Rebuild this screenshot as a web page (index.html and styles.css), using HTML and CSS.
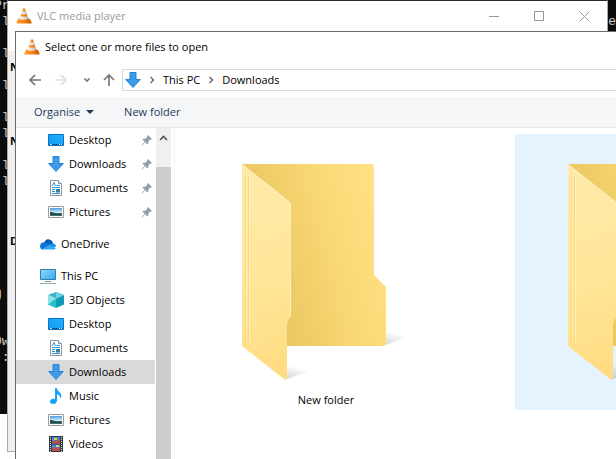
FILE: index.html
```html
<!DOCTYPE html>
<html lang="en">
<head>
<meta charset="utf-8">
<title>Select one or more files to open</title>
<link rel="stylesheet" href="styles.css">
</head>
<body>
<svg class="defs" aria-hidden="true">
  <defs>
    <linearGradient id="g-orange"><stop offset="0" stop-color="#ffa22d"/><stop offset=".6" stop-color="#f47a08"/><stop offset="1" stop-color="#c75a00"/></linearGradient>
    <linearGradient id="g-white"><stop offset="0" stop-color="#fff"/><stop offset="1" stop-color="#b5b8bd"/></linearGradient>
    <linearGradient id="g-screen" x1="0" y1="1" x2="1" y2="0"><stop offset="0" stop-color="#1598f5"/><stop offset="1" stop-color="#27b0ff"/></linearGradient>
    <linearGradient id="g-pc" x1="0" y1="0" x2="1" y2="1"><stop offset="0" stop-color="#8ed9ff"/><stop offset="1" stop-color="#35a8f0"/></linearGradient>
    <linearGradient id="g-sky" x2="0" y2="1"><stop offset="0" stop-color="#4b9be4"/><stop offset=".6" stop-color="#d9effb"/><stop offset=".65" stop-color="#3e6f63"/><stop offset="1" stop-color="#356b86"/></linearGradient>
    <linearGradient id="g-back" gradientUnits="userSpaceOnUse" x1="70" y1="126" x2="184" y2="96"><stop offset="0" stop-color="#eac862"/><stop offset=".5" stop-color="#f7d673"/><stop offset="1" stop-color="#ffe082"/></linearGradient>
    <linearGradient id="g-front" gradientUnits="userSpaceOnUse" x1="44" y1="70" x2="100" y2="240"><stop offset="0" stop-color="#ffe9a6"/><stop offset=".5" stop-color="#ffe596"/><stop offset="1" stop-color="#ffdb80"/></linearGradient>
    <linearGradient id="g-shade" x1="0" y1="1" x2=".4" y2="0"><stop offset="0" stop-color="#000" stop-opacity=".16"/><stop offset="1" stop-color="#000" stop-opacity="0"/></linearGradient>
    <symbol id="cone" viewBox="0 0 16 16"><path d="M2.500 10.500h11L15.500 14v1.500H.5V14z" fill="url(#g-orange)"/><path d="M7 .7q1-.9 2 0L12.600 12q-4.600 2.200-9.200 0z" fill="url(#g-orange)"/><path d="M6.200 3.200h3.600l.9 2.800q-2.700 1-5.400 0zM4.700 8q3.300 1.200 6.600 0l.9 2.900q-4.200 1.700-8.400 0z" fill="url(#g-white)"/></symbol>
    <symbol id="down" viewBox="0 0 16 16"><path d="M5 .5h6v7h4.300L8 15.500.7 7.500H5z" fill="#3e9be9" stroke="#2382d3"/></symbol>
    <symbol id="desktop" viewBox="0 0 16 16"><path d="M.5 2.500h15v11H.5z" fill="url(#g-screen)" stroke="#0874c9"/><path d="M1 12.500h14" stroke="#075a9f"/><path d="M2 12.500h1.500M11 12.500h1M13 12.500h1" stroke="#fff"/></symbol>
    <symbol id="doc" viewBox="0 0 16 16"><path d="M2.500.5h8l3 3v12h-11z" fill="#fff" stroke="#929699"/><path d="M10.500.5v3h3" fill="#eee" stroke="#929699"/><path d="m4 6 2-3.500L7.500 6M8.500 5.500H12M4 7.500h8M4 9.500h3M4 11.500h3M4 13.500h8" fill="none" stroke="#2196d8"/><path d="M8 9h4v3.500H8z" fill="#397e9b"/></symbol>
    <symbol id="picture" viewBox="0 0 16 16"><path d="M.5 2.500h15v11H.5z" fill="#fff" stroke="#9b9b9b"/><path d="M2 4h12v8H2z" fill="url(#g-sky)"/><path d="M2 8q3-.5 6 1.400 3 .2 6 .6v1q-6-.5-12 0z" fill="#24513e"/></symbol>
    <symbol id="cloud" viewBox="0 0 16 16"><path d="M4 7Q6 1 11.200 4.300q1.500 1 1.800 3.200L8 10z" fill="#0a5cb5"/><path d="M0 10.500Q0 6 5 6.200l6 3.300-8.500 4Q.2 13 0 10.500z" fill="#1374d4"/><path d="M9 9q2-2.200 4.500-1.500Q16 8 16 10.700l-5 1z" fill="#168de2"/><path d="M2 13 9.500 9l6.300 3.200q-.6 1.300-2.300 1.300H3.500z" fill="#2da9ef"/></symbol>
    <symbol id="pc" viewBox="0 0 16 16"><path d="M.5 1.500h15v10H.5z" fill="url(#g-pc)" stroke="#397da5"/><path d="M5 13.500h6" stroke="#7c93a3"/><path d="M0 15.500h16" stroke="#8ea9bb"/></symbol>
    <symbol id="cube" viewBox="0 0 16 16"><path d="m8 0 8 3-8 3.500L0 3z" fill="#36b3c9"/><path d="m0 3 8 3.500V16l-8-3.500z" fill="#8be5e9"/><path d="m16 3-8 3.500V16l8-3.500z" fill="#119bb4"/><path d="m0 12.500 8-6V16z" fill="#25c2cc"/><path d="m8 0 8 3-8 3.500z" fill="#72cfdd"/></symbol>
    <symbol id="note" viewBox="0 0 16 16"><path d="M7 0h1.800q.2 2.500 2.700 4.300 3.200 2.500 1 6.700.2-3.500-3.500-4.800v6.500Q8.600 15.600 5.500 16 2 16 2 13.500 2.200 10.800 5.500 10.700L7 11z" fill="#14a0ff"/></symbol>
    <symbol id="film" viewBox="0 0 16 16"><path d="M1 0h14v16H1z" fill="#35383c"/><path d="M2.500 1v15M13.500 1v15" stroke="#dedede" stroke-dasharray="1 1"/><path d="M4 1h8v6.500H4zM4 8.500h8V15H4z" fill="#3c82df"/><path d="M4 5h3l2-2 3 2v2.500H4zM4 13l3-2 5 1v3H4z" fill="#b55045"/><path d="M6 2h3v2H6zM8 9h3v2H8z" fill="#f2ce35"/></symbol>
    <symbol id="pin" viewBox="0 0 12 12"><path d="m7 1 4 4-1 .8-.8-.2L7.500 7.300 7.300 9.700l-.9.8-2.200-2.200L1 11.500l-.5-.5L3.700 7.800 1.500 5.600l.8-.9 2.400-.2L6.400 2.800 6.200 2z" fill="#929da6"/></symbol>
    <symbol id="sep" viewBox="0 0 6 8"><path d="m1.500 1 3 3-3 3" fill="none" stroke="#666" stroke-width="1.400"/></symbol>
    <symbol id="folder" viewBox="0 0 256 256">
      <path d="m188 211 20-8-20-5z" fill="url(#g-shade)"/><path d="m89 245 22-8-22-5z" fill="url(#g-shade)"/>
      <path d="M44 30h129q3 0 3 3v108l12 12v56q0 3-3 3H60z" fill="url(#g-back)"/>
      <path d="m44 30 47 37q2 2 2 4v111l-4 7v54q0 4-3 2l-42-33z" fill="url(#g-front)"/>
      <path d="m45 31 46 37q1.500 1 1.500 3v111" fill="none" stroke="#fff0bd"/>
      <path d="M47.500 39v166M50.500 42v166" stroke="#f9d979"/><path d="M48.500 39v166M51.500 42v166" stroke="#fff0bd"/>
    </symbol>
  </defs>
</svg>
<main class="screen">
  <section class="terminal" aria-label="Console">
<pre class="console">Pr
 l

 l

 l

 l
 l

 l
 l






g


0w
 :
:
:</pre>
    <pre class="console console-end">:e</pre>
  </section>
  <section class="player" aria-label="VLC media player">
    <header class="player-bar">
      <svg class="icon"><use href="#cone"/></svg>
      <h1 class="player-title">VLC media player</h1>
      <div class="controls">
        <button class="control" aria-label="Minimise"><svg viewBox="0 0 11 11"><path d="M0 5.500h10"/></svg></button>
        <button class="control" aria-label="Maximise"><svg viewBox="0 0 11 11"><path d="M.5.500h9v9h-9z"/></svg></button>
        <button class="control" aria-label="Close"><svg viewBox="0 0 11 11"><path d="m.5.500 10 10m0-10-10 10"/></svg></button>
      </div>
    </header>
    <div class="player-body"><b>N</b><b>N</b><b>D</b></div>
  </section>
  <section class="dialog" aria-label="Select one or more files to open">
    <header class="dialog-title"><svg class="icon"><use href="#cone"/></svg><h2>Select one or more files to open</h2></header>
    <div class="navigation">
      <button class="step" aria-label="Back"><svg viewBox="0 0 14 12"><path d="M13 6H2m5-5L2 6l5 5"/></svg></button>
      <button class="step step-off" aria-label="Forward" disabled><svg viewBox="0 0 14 12"><path d="M1 6h11M7 1l5 5-5 5"/></svg></button>
      <button class="step" aria-label="Recent locations"><svg viewBox="0 0 14 12"><path d="m4.500 4.500 2.500 2.500 2.500-2.500"/></svg></button>
      <button class="step" aria-label="Up"><svg viewBox="0 0 14 12"><path d="M7 12V1M2 6l5-5 5 5"/></svg></button>
      <nav class="address" aria-label="Address">
        <svg class="icon"><use href="#down"/></svg>
        <svg class="sep"><use href="#sep"/></svg>
        <a href="#">This PC</a>
        <svg class="sep"><use href="#sep"/></svg>
        <a href="#">Downloads</a>
      </nav>
    </div>
    <div class="toolbar">
      <button class="command">Organise <svg class="caret" viewBox="0 0 8 4"><path d="M0 0h8L4 4z"/></svg></button>
      <button class="command">New folder</button>
    </div>
    <div class="panes">
      <nav class="tree" aria-label="Places">
        <ul class="group">
          <li><a class="place nested" href="#"><svg class="icon"><use href="#desktop"/></svg>Desktop<svg class="pin"><use href="#pin"/></svg></a></li>
          <li><a class="place nested" href="#"><svg class="icon"><use href="#down"/></svg>Downloads<svg class="pin"><use href="#pin"/></svg></a></li>
          <li><a class="place nested" href="#"><svg class="icon"><use href="#doc"/></svg>Documents<svg class="pin"><use href="#pin"/></svg></a></li>
          <li><a class="place nested" href="#"><svg class="icon"><use href="#picture"/></svg>Pictures<svg class="pin"><use href="#pin"/></svg></a></li>
        </ul>
        <ul class="group">
          <li><a class="place" href="#"><svg class="icon"><use href="#cloud"/></svg>OneDrive</a></li>
        </ul>
        <ul class="group">
          <li><a class="place" href="#"><svg class="icon"><use href="#pc"/></svg>This PC</a></li>
          <li><a class="place nested" href="#"><svg class="icon"><use href="#cube"/></svg>3D Objects</a></li>
          <li><a class="place nested" href="#"><svg class="icon"><use href="#desktop"/></svg>Desktop</a></li>
          <li><a class="place nested" href="#"><svg class="icon"><use href="#doc"/></svg>Documents</a></li>
          <li><a class="place nested current" href="#" aria-current="page"><svg class="icon"><use href="#down"/></svg>Downloads</a></li>
          <li><a class="place nested" href="#"><svg class="icon"><use href="#note"/></svg>Music</a></li>
          <li><a class="place nested" href="#"><svg class="icon"><use href="#picture"/></svg>Pictures</a></li>
          <li><a class="place nested" href="#"><svg class="icon"><use href="#film"/></svg>Videos</a></li>
        </ul>
      </nav>
      <div class="scrollbar">
        <button class="scroll-up" aria-label="Scroll up"><svg viewBox="0 0 9 6"><path d="m1 5 3.500-3.500L8 5"/></svg></button>
        <div class="thumb"></div>
      </div>
      <ul class="files">
        <li><a class="file" href="#"><svg class="folder"><use href="#folder"/></svg>New folder</a></li>
        <li><a class="file selected" href="#"><svg class="folder"><use href="#folder"/></svg>New folder</a></li>
      </ul>
    </div>
  </section>
</main>
</body>
</html>
```

FILE: styles.css
```css
* { box-sizing: border-box; }

body {
  margin: 0;
  background: #fff;
  color: #000;
  font: 11px/16px "Open Sans", "Noto Sans", sans-serif;
  overflow: hidden;
}

.defs { position: absolute; width: 0; height: 0; }
svg { display: block; flex: none; }
h1, h2 { margin: 0; font-size: 11px; font-weight: 400; }
ul { margin: 0; padding: 0; list-style: none; }
a { color: inherit; text-decoration: none; }
button { padding: 0; border: 0; background: none; color: inherit; font: inherit; }
.icon { width: 16px; height: 16px; }

.screen { position: relative; height: 100vh; overflow: hidden; }

/* Console at the back */
.terminal {
  position: absolute;
  inset: 0 0 auto;
  height: 414px;
  overflow: hidden;
  background: #0c0c0c;
  color: #ccc;
}
.console { margin: -2px 0 0 -6px; font: 13px/16px "Liberation Mono", monospace; }
.console-end { position: absolute; top: 16px; right: 0; }

/* Player window */
.player {
  position: absolute;
  inset: 0 8px 7px 7px;
  display: flex;
  flex-direction: column;
  border: 1px solid #aaa;
  border-top-color: #2b2b2b;
  background: #f0f0f0;
}
.player-bar { display: flex; align-items: center; height: 50px; padding: 0 0 20px 8px; background: #fff; color: #999; }
.player-title { margin-left: 5px; }
.controls { display: flex; margin-left: auto; }
.control { display: grid; place-items: center; width: 45px; height: 29px; }
.control svg { width: 11px; height: 11px; fill: none; stroke: #999; }
.player-body { display: flex; flex-direction: column; padding: 8px 2px; }
.player-body b { height: 74px; }
.player-body b + b + b { margin-top: 26px; }

/* File dialog */
.dialog {
  position: absolute;
  inset: 31px 0 0 15px;
  display: flex;
  flex-direction: column;
  border: solid #6b6b6b;
  border-width: 1px 0 0 1px;
  background: #fff;
}
.dialog-title { display: flex; align-items: center; gap: 5px; height: 30px; padding-left: 8px; }
.navigation { display: flex; align-items: center; height: 35px; padding-left: 8px; }
.step { display: grid; place-items: center; width: 22px; height: 22px; }
.step svg { width: 14px; height: 12px; fill: none; stroke: #777; stroke-width: 1.7; }
.step-off { width: 30px; }
.step-off svg { stroke: #ddd; }
.address {
  display: flex;
  flex: 1;
  align-items: center;
  gap: 8px;
  height: 22px;
  margin-left: 2px;
  padding-left: 2px;
  border: solid #d9d9d9;
  border-width: 1px 0 1px 1px;
}
.sep { width: 6px; height: 8px; }

.toolbar {
  display: flex;
  flex: none;
  align-items: center;
  gap: 30px;
  height: 31px;
  padding-left: 18px;
  border-bottom: 1px solid #e6e7e8;
  background: #f5f6f7;
  color: #1e395b;
}
.command { display: flex; align-items: center; gap: 6px; }
.caret { width: 8px; height: 4px; fill: #1e395b; }

.panes { display: flex; flex: 1; min-height: 0; overflow: hidden; }
.tree { display: flex; flex: none; flex-direction: column; gap: 8px; width: 139px; }
.place { display: flex; align-items: center; gap: 5px; height: 24px; padding-left: 24px; }
.nested { padding-left: 32px; }
.current { background: #d9d9d9; }
.pin { width: 12px; height: 12px; margin: 0 2px 0 auto; }
.scrollbar { display: flex; flex: none; flex-direction: column; width: 15px; margin-left: 1px; background: #f0f0f0; }
.scroll-up { display: grid; flex: none; place-items: center; height: 19px; }
.scroll-up svg { width: 9px; height: 6px; fill: none; stroke: #555; stroke-width: 1.7; }
.thumb { flex: 1; margin-top: 20px; background: #cdcdcd; }

.files {
  display: flex;
  flex: 1;
  align-items: flex-start;
  gap: 52px;
  min-width: 0;
  margin-left: 3px;
  padding: 6px 0 0 14px;
  overflow: hidden;
  border-left: 1px solid #f5f5f5;
}
.file { display: flex; flex-direction: column; align-items: center; width: 274px; height: 276px; line-height: 20px; }
.folder { width: 256px; height: 256px; }
.selected { background: #e5f3ff; }
```
